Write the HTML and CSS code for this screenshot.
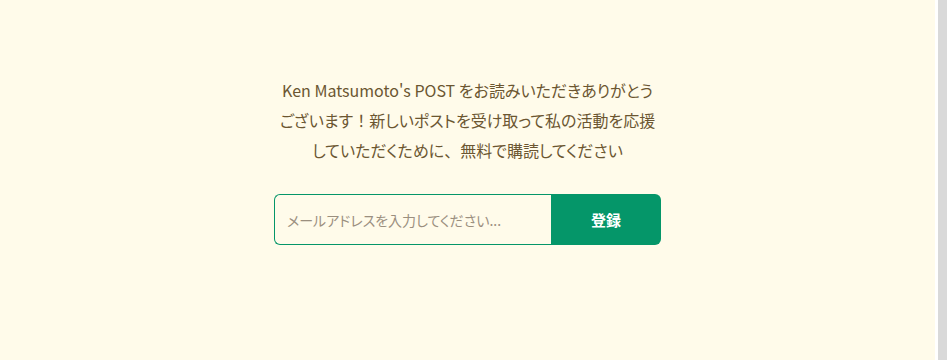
FILE: index.html
```html
<!DOCTYPE html>
<html lang="ja">
<head>
    <meta charset="UTF-8">
    <meta name="viewport" content="width=device-width, initial-scale=1.0">
    <title>Ken Matsumoto's POST</title>
    <link rel="stylesheet" href="styles.css">
</head>
<body>
    <main class="page">
        <section class="subscribe">
            <p class="lead">Ken Matsumoto's POST をお読みいただきありがとうございます<span class="full">！</span>新しいポストを受け取って私の活動を応援していただくために<span class="full">、</span>無料で購読してください</p>
            <form class="subscribe-form" id="formSubscribe">
                <input type="email" name="email" placeholder="メールアドレスを入力してください..." required>
                <button type="submit">登録</button>
            </form>
        </section>
    </main>
    <div class="scroll-track"><div class="scroll-thumb"></div></div>
</body>
</html>
```

FILE: styles.css
```css
:root {
    --bg-color: #fffbea;
    --text-color: #6b5631;
    --green: #059669;
    --radius: 6px;
}

* {
    margin: 0;
    padding: 0;
    box-sizing: border-box;
}

body {
    font-family: "Noto Sans CJK JP", "Noto Sans", sans-serif;
    background-color: var(--bg-color);
    color: var(--text-color);
    height: 100vh;
    display: flex;
    overflow: hidden;
}

.page {
    flex: 1;
    display: flex;
    justify-content: center;
    padding-top: 75px;
}

.subscribe {
    width: 387px;
    display: flex;
    flex-direction: column;
    align-items: center;
}

.lead {
    font-size: 16px;
    line-height: 30px;
    text-align: center;
    font-feature-settings: "palt";
    max-width: 380px;
    margin-bottom: 29px;
}

.lead .full {
    font-feature-settings: normal;
}

.subscribe-form {
    display: flex;
    width: 100%;
    height: 51px;
}

.subscribe-form input {
    flex: 1;
    min-width: 0;
    border: 1px solid var(--green);
    border-right: none;
    border-radius: var(--radius) 0 0 var(--radius);
    background: transparent;
    padding: 0 12px;
    font-family: inherit;
    font-size: 14px;
    font-feature-settings: "palt";
    color: var(--text-color);
}

.subscribe-form input::placeholder {
    color: #9b8f7f;
}

.subscribe-form input:focus {
    outline: none;
}

.subscribe-form button {
    width: 110px;
    border: none;
    border-radius: 0 var(--radius) var(--radius) 0;
    background-color: var(--green);
    color: white;
    font-family: inherit;
    font-size: 15px;
    font-weight: 700;
    cursor: pointer;
}

.scroll-track {
    width: 15px;
    background: #ffffff;
    padding: 0 3px;
}

.scroll-thumb {
    height: 100%;
    background: #d9d9d9;
}
```
